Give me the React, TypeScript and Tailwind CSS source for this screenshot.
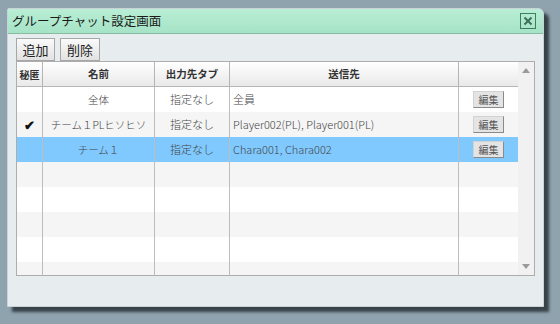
import React from "react";

const font = { fontFamily: '"Noto Sans CJK JP", "Noto Sans", sans-serif' };

type Row = { secret: boolean; name: string; tab: string; to: string; selected?: boolean; edit: boolean };

const rows: Row[] = [
  { secret: false, name: "全体", tab: "指定なし", to: "全員", edit: true },
  { secret: true, name: "チーム１PLヒソヒソ", tab: "指定なし", to: "Player002(PL), Player001(PL)", edit: true },
  { secret: false, name: "チーム１", tab: "指定なし", to: "Chara001, Chara002", selected: true, edit: true },
  { secret: false, name: "", tab: "", to: "", edit: false },
  { secret: false, name: "", tab: "", to: "", edit: false },
  { secret: false, name: "", tab: "", to: "", edit: false },
  { secret: false, name: "", tab: "", to: "", edit: false },
  { secret: false, name: "", tab: "", to: "", edit: false },
];

const cols = "grid grid-cols-[26px_112px_75px_229px_59px]";

export default function App() {
  return (
    <div className="w-[560px] h-[324px] bg-[#8fa3ae] pt-[8px] pl-[7px] overflow-hidden" style={font}>
      <div className="w-[537px] h-[299px] bg-[#e7ecef] border border-[#c9d2d6] rounded-tr-[6px] rounded-tl-[2px] shadow-[5px_5px_3px_rgba(40,50,55,0.85)] flex flex-col">
        <div className="h-[25px] shrink-0 rounded-tr-[5px] rounded-tl-[1px] bg-gradient-to-b from-[#b8eed5] to-[#a6e3c6] border-b border-[#86bca3] flex items-center justify-between pl-[4px] pr-[7px]">
          <span className="text-[12.5px] text-[#1a1a1a] leading-none">グループチャット設定画面</span>
          <div className="w-[16px] h-[16px] border border-[#3f7d60] flex items-center justify-center">
            <svg width="10" height="10" viewBox="0 0 10 10">
              <path d="M1.5 1.5 L8.5 8.5 M8.5 1.5 L1.5 8.5" stroke="#3f6f58" strokeWidth="2" />
            </svg>
          </div>
        </div>
        <div className="pl-[8px] pt-[4px] flex gap-[5px]">
          <button className="w-[39px] h-[23px] border border-[#a7a7a7] bg-gradient-to-b from-[#fafafa] to-[#e2e2e2] text-[13px] text-[#222] leading-none flex items-center justify-center">追加</button>
          <button className="w-[40px] h-[23px] border border-[#a7a7a7] bg-gradient-to-b from-[#fafafa] to-[#e2e2e2] text-[13px] text-[#222] leading-none flex items-center justify-center">削除</button>
        </div>
        <div className="ml-[8px] w-[519px] h-[215px] border border-[#adadad] bg-white flex overflow-hidden">
          <div className="w-[501px] flex flex-col">
            <div className={`${cols} h-[25px] shrink-0 bg-gradient-to-b from-[#ffffff] to-[#e9e9e9] border-b border-[#b5b5b5] text-[10.5px] font-bold text-[#333]`}>
              <div className="flex items-center justify-center border-r border-[#b5b5b5] text-[10px]">秘匿</div>
              <div className="flex items-center justify-center border-r border-[#b5b5b5]">名前</div>
              <div className="flex items-center justify-center border-r border-[#b5b5b5]">出力先タブ</div>
              <div className="flex items-center justify-center border-r border-[#b5b5b5]">送信先</div>
              <div></div>
            </div>
            {rows.map((r, i) => {
              const bg = r.selected ? "bg-[#80c9ff]" : i % 2 === 1 ? "bg-[#f5f5f5]" : "bg-white";
              return (
                <div key={i} className={`${cols} h-[25px] shrink-0 ${bg} text-[11px] font-light text-[#444]`}>
                  <div className="flex items-center justify-center border-r border-[#bdbdbd] text-[13px] font-bold text-[#111]">{r.secret ? "✔" : ""}</div>
                  <div className="flex items-center justify-center border-r border-[#bdbdbd] whitespace-nowrap text-[10.5px]">{r.name}</div>
                  <div className="flex items-center justify-center border-r border-[#bdbdbd]">{r.tab}</div>
                  <div className="flex items-center pl-[3px] border-r border-[#bdbdbd] whitespace-nowrap">{r.to}</div>
                  <div className="flex items-center justify-center">
                    {r.edit && (
                      <div className="w-[31px] h-[17px] bg-[#e4e4e4] border border-[#d2d2d2] border-r-[#8a8a8a] border-b-[#8a8a8a] text-[10px] font-normal text-[#555] flex items-center justify-center leading-none">編集</div>
                    )}
                  </div>
                </div>
              );
            })}
          </div>
          <div className="w-[18px] bg-[#f1f1f1] flex flex-col items-center justify-between py-[6px]">
            <svg width="8" height="5" viewBox="0 0 8 5"><path d="M4 0 L8 5 L0 5 Z" fill="#9a9a9a" /></svg>
            <svg width="8" height="5" viewBox="0 0 8 5"><path d="M0 0 L8 0 L4 5 Z" fill="#9a9a9a" /></svg>
          </div>
        </div>
      </div>
    </div>
  );
}
